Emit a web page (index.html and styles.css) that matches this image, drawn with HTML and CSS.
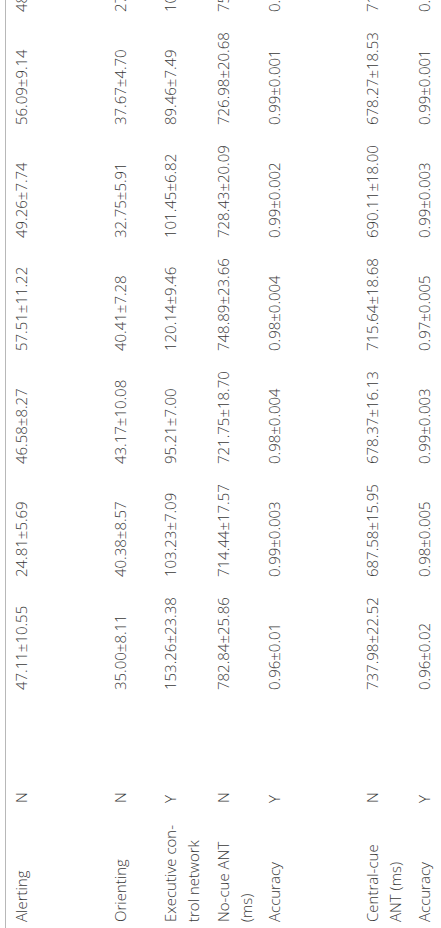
FILE: index.html
```html
<!DOCTYPE html>
<html lang="en">
<head>
<meta charset="utf-8">
<title>ANT results</title>
<link rel="stylesheet" href="styles.css">
</head>
<body>
<div class="sheet">
  <table class="tbl">
    <colgroup>
      <col class="c-label">
      <col class="c-flag">
      <col class="c-val"><col class="c-val"><col class="c-val"><col class="c-val"><col class="c-val"><col class="c-val"><col class="c-val">
    </colgroup>
    <tbody>
      <tr class="r99">
        <td class="lbl">Alerting</td><td>N</td>
        <td class="num">47.11±10.55</td><td class="num">24.81±5.69</td><td class="num">46.58±8.27</td><td class="num">57.51±11.22</td><td class="num">49.26±7.74</td><td class="num">56.09±9.14</td><td class="num">48</td>
      </tr>
      <tr class="r50">
        <td class="lbl">Orienting</td><td>N</td>
        <td class="num">35.00±8.11</td><td class="num">40.38±8.57</td><td class="num">43.17±10.08</td><td class="num">40.41±7.28</td><td class="num">32.75±5.91</td><td class="num">37.67±4.70</td><td class="num">27</td>
      </tr>
      <tr class="r53">
        <td class="lbl">Executive con&shy;trol network</td><td>Y</td>
        <td class="num">153.26±23.38</td><td class="num">103.23±7.09</td><td class="num">95.21±7.00</td><td class="num">120.14±9.46</td><td class="num">101.45±6.82</td><td class="num">89.46±7.49</td><td class="num">10</td>
      </tr>
      <tr class="r51">
        <td class="lbl">No-cue ANT (ms)</td><td>N</td>
        <td class="num">782.84±25.86</td><td class="num">714.44±17.57</td><td class="num">721.75±18.70</td><td class="num">748.89±23.66</td><td class="num">728.43±20.09</td><td class="num">726.98±20.68</td><td class="num">75</td>
      </tr>
      <tr class="r98">
        <td class="lbl">Accuracy</td><td>Y</td>
        <td class="num">0.96±0.01</td><td class="num">0.99±0.003</td><td class="num">0.98±0.004</td><td class="num">0.98±0.004</td><td class="num">0.99±0.002</td><td class="num">0.99±0.001</td><td class="num">0.9</td>
      </tr>
      <tr class="r52">
        <td class="lbl">Central-cue ANT (ms)</td><td>N</td>
        <td class="num">737.98±22.52</td><td class="num">687.58±15.95</td><td class="num">678.37±16.13</td><td class="num">715.64±18.68</td><td class="num">690.11±18.00</td><td class="num">678.27±18.53</td><td class="num">71</td>
      </tr>
      <tr class="r52">
        <td class="lbl">Accuracy</td><td>Y</td>
        <td class="num">0.96±0.02</td><td class="num">0.98±0.005</td><td class="num">0.99±0.003</td><td class="num">0.97±0.005</td><td class="num">0.99±0.003</td><td class="num">0.99±0.001</td><td class="num">0.9</td>
      </tr>
    </tbody>
  </table>
</div>
</body>
</html>
```
FILE: styles.css
```css
html, body {
  margin: 0;
  padding: 0;
  background: #ffffff;
  overflow: hidden;
}
body {
  width: 441px;
  height: 928px;
}
.sheet {
  width: 1023px;
  padding-top: 5px;
  transform-origin: 0 0;
  transform: translateY(928px) rotate(-90deg);
  font-family: "Open Sans", "DejaVu Sans", sans-serif;
  font-weight: 300;
  font-size: 15px;
  line-height: 23px;
  color: #3a3a3a;
}
.tbl {
  width: 1023px;
  table-layout: fixed;
  border-collapse: collapse;
  border-top: 1px solid #b8b8b8;
}
.c-label { width: 119px; }
.c-flag { width: 113px; }
.c-val { width: 113px; }
.tbl td {
  vertical-align: top;
  text-align: left;
  padding: 4px 6px 0 6px;
}
.tbl .num { white-space: nowrap; }
.tbl .lbl { hyphens: manual; }
.r99 { height: 99px; }
.r98 { height: 98px; }
.r53 { height: 53px; }
.r52 { height: 52px; }
.r51 { height: 51px; }
.r50 { height: 50px; }
```
